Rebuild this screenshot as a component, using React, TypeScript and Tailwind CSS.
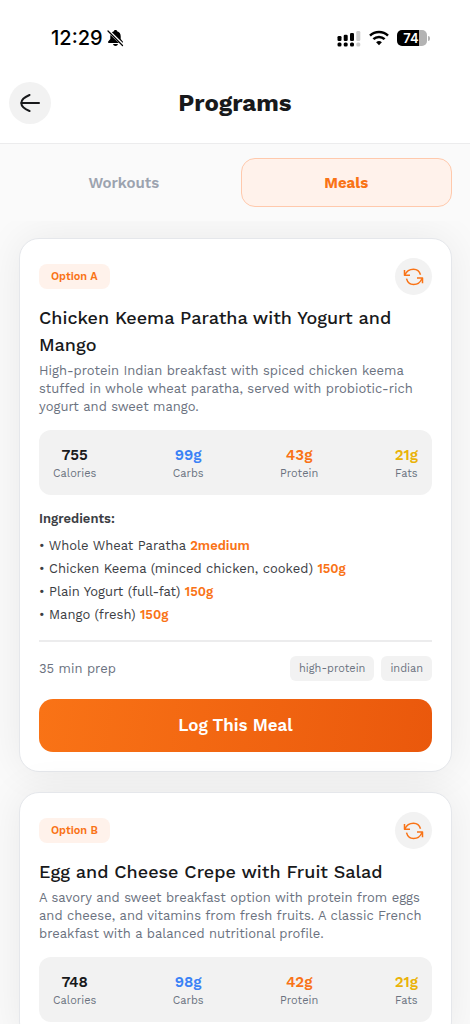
interface Meal {
  option: string;
  title: string;
  desc: string;
  macros: [string, string, string, string];
  ingredients?: { name: string; amount: string }[];
  prep?: string;
  tags?: string[];
}

const MEALS: Meal[] = [
  {
    option: "Option A",
    title: "Chicken Keema Paratha with Yogurt and Mango",
    desc: "High-protein Indian breakfast with spiced chicken keema stuffed in whole wheat paratha, served with probiotic-rich yogurt and sweet mango.",
    macros: ["755", "99g", "43g", "21g"],
    ingredients: [
      { name: "Whole Wheat Paratha", amount: "2medium" },
      { name: "Chicken Keema (minced chicken, cooked)", amount: "150g" },
      { name: "Plain Yogurt (full-fat)", amount: "150g" },
      { name: "Mango (fresh)", amount: "150g" },
    ],
    prep: "35 min prep",
    tags: ["high-protein", "indian"],
  },
  {
    option: "Option B",
    title: "Egg and Cheese Crepe with Fruit Salad",
    desc: "A savory and sweet breakfast option with protein from eggs and cheese, and vitamins from fresh fruits. A classic French breakfast with a balanced nutritional profile.",
    macros: ["748", "98g", "42g", "21g"],
  },
];

const MACROS = [
  { label: "Calories", color: "text-[#18191b]" },
  { label: "Carbs", color: "text-[#3b82f6]" },
  { label: "Protein", color: "text-[#f97316]" },
  { label: "Fats", color: "text-[#eab308]" },
];

function StatusBar() {
  return (
    <div className="flex h-[76px] items-center justify-between pr-10 pl-[51px] font-[Inter,sans-serif]">
      <div className="flex items-center gap-1">
        <span className="text-xl leading-6 font-medium text-black">12:29</span>
        <svg width="17" height="18" viewBox="0 0 17 18">
          <path
            d="M8.500 1C7.600 1 7 1.500 6.900 2.300 4.600 3 3.300 4.900 3.300 7.300v2.700L1.200 12.600c-.4.600-.1 1.400.6 1.400h13.400c.7 0 1-.8.6-1.400L13.700 10V7.300c0-2.400-1.300-4.300-3.600-5C10 1.500 9.400 1 8.500 1z"
            fill="#000"
          />
          <path d="M6 15h5c-.3 1.300-1.300 2-2.500 2S6.300 16.300 6 15z" fill="#000" />
          <path d="M1.500 2l14.500 14" stroke="#fff" strokeWidth="3" />
          <path d="M1 2l14.500 14.500" stroke="#000" strokeWidth="1.300" strokeLinecap="round" />
        </svg>
      </div>
      <div className="flex items-center gap-2">
        <svg width="24" height="17" viewBox="0 0 24 17">
          <g fill="#000">
            <rect x="0.500" y="6" width="4" height="5" rx="1.300" />
            <rect x="6.700" y="4.800" width="4" height="6.200" rx="1.300" />
            <rect x="13" y="3" width="4" height="8" rx="1.300" />
            <rect x="0.500" y="12.500" width="4" height="4" rx="1.500" />
            <rect x="6.700" y="12.500" width="4" height="4" rx="1.500" />
            <rect x="13" y="12.500" width="4" height="4" rx="1.500" />
          </g>
          <g fill="#ccc">
            <rect x="19.300" y="1" width="4" height="10" rx="1.300" />
            <rect x="19.300" y="12.500" width="4" height="4" rx="1.500" />
          </g>
        </svg>
        <svg width="20" height="16" viewBox="0 0 20 16" fill="none" stroke="#000" strokeWidth="2.500">
          <path d="M1 5.700a13 13 0 0 1 18 0" />
          <path d="M4.400 9.200a8 8 0 0 1 11.200 0" />
          <path d="M10 15.300l-2.900-3a4.200 4.200 0 0 1 5.800 0z" fill="#000" stroke="none" />
        </svg>
        <div className="flex items-center gap-px">
          <div className="flex h-4 w-[30px] items-center justify-center rounded-[5px] bg-linear-to-r from-black from-74% to-[#b3b3b3] to-74% pr-0.5 text-[13px] leading-4 font-semibold text-white">
            74
          </div>
          <div className="h-[5px] w-0.5 rounded-r-full bg-[#b3b3b3]" />
        </div>
      </div>
    </div>
  );
}

function SwapIcon() {
  return (
    <svg
      width="21"
      height="18"
      viewBox="0 0 21 18"
      fill="none"
      stroke="#f97316"
      strokeWidth="1.500"
      strokeLinejoin="round"
    >
      <path d="M1.500 2v5.200H7" />
      <path d="M1.800 7C3.400 3.400 6.600 1.200 10.500 1.200c3.300 0 6 2 7 5.600" />
      <path d="M14 10h5.500v5.200" />
      <path d="M3.500 10.600c1 3.700 3.700 5.900 7 5.900 3.900 0 7.100-2.400 8.700-6.300" />
    </svg>
  );
}

function MealCard({ meal }: { meal: Meal }) {
  return (
    <article className="rounded-[20px] border border-gray-200 bg-white p-[19px] shadow-[0_0_40px_rgba(0,0,0,0.07)]">
      <div className="flex items-center justify-between">
        <span className="rounded-lg bg-[#fff2eb] px-3 text-[11px] leading-[25px] font-semibold text-[#f97316]">
          {meal.option}
        </span>
        <button
          aria-label="Swap meal"
          className="flex size-[37px] items-center justify-center rounded-full bg-[#f2f2f2]"
        >
          <SwapIcon />
        </button>
      </div>

      <h2 className="mt-[9px] text-lg leading-[27px] font-medium text-[#18191b]">{meal.title}</h2>
      <p className="mt-1 text-[13px] leading-[18px] text-[#6b7280]">{meal.desc}</p>

      <div className="mt-3.5 flex h-[65px] items-center justify-between rounded-xl bg-[#f2f2f2] px-3.5 pt-0.5">
        {MACROS.map((m, i) => (
          <div key={m.label} className="text-center">
            <div className={`text-[15px] leading-5 font-semibold ${m.color}`}>{meal.macros[i]}</div>
            <div className="text-[11px] leading-[18px] text-[#6b7280]">{m.label}</div>
          </div>
        ))}
      </div>

      {meal.ingredients && (
        <>
          <h3 className="mt-3.5 text-[13px] leading-5 font-semibold text-[#3c3e44]">
            Ingredients:
          </h3>
          <ul className="mt-[5px] text-[13px] leading-[23px] text-[#3c3e44]">
            {meal.ingredients.map((ing) => (
              <li key={ing.name}>
                • {ing.name} <span className="font-semibold text-[#f97316]">{ing.amount}</span>
              </li>
            ))}
          </ul>
        </>
      )}

      {meal.tags && (
        <>
          <div className="mt-3.5 flex items-center justify-between border-t-2 border-[#ececed] pt-3.5">
            <span className="text-[13px] leading-[18px] text-[#6b7280]">{meal.prep}</span>
            <div className="flex gap-[7px]">
              {meal.tags.map((tag) => (
                <span
                  key={tag}
                  className="rounded-md bg-[#f2f2f2] px-[9px] text-[11px] leading-[25px] text-[#6b7280]"
                >
                  {tag}
                </span>
              ))}
            </div>
          </div>
          <button className="mt-[18px] h-[53px] w-full rounded-[14px] bg-linear-98 from-[#f97316] to-[#ea580c] text-[17px] font-semibold text-white">
            Log This Meal
          </button>
        </>
      )}
    </article>
  );
}

export default function App() {
  return (
    <div className="flex h-screen flex-col overflow-hidden bg-[#fafafa] font-['Work_Sans',Inter,sans-serif]">
      <header className="border-b border-[#ececed] bg-white">
        <StatusBar />
        <div className="grid h-[67px] grid-cols-[42px_1fr_42px] items-start px-[9px] pt-1.5">
          <button
            aria-label="Back"
            className="flex size-[42px] items-center justify-center rounded-full bg-[#f2f2f2]"
          >
            <svg
              width="20"
              height="18"
              viewBox="0 0 20 18"
              fill="none"
              stroke="#18191b"
              strokeWidth="2"
              strokeLinecap="round"
              strokeLinejoin="round"
            >
              <path d="M1.500 9H19" />
              <path d="M9.500 1C4 3.300 1.300 5.500 1.300 9S4 14.700 9.500 17" />
            </svg>
          </button>
          <h1 className="text-center text-2xl leading-[42px] font-bold text-[#18191b]">
            Programs
          </h1>
        </div>
      </header>

      <nav className="flex gap-3 py-3.5 pr-[18px] pl-[19px]">
        <button className="h-[49px] flex-1 rounded-[14px] pt-0.5 text-[15px] font-semibold text-[#9ca3af]">
          Workouts
        </button>
        <button className="h-[49px] flex-1 rounded-[14px] border border-[#ffc9ac] bg-[#fff2eb] pt-0.5 text-[15px] font-bold text-[#f97316]">
          Meals
        </button>
      </nav>

      <main className="flex min-h-0 flex-1 flex-col gap-5 overflow-y-auto pt-[17px] pr-[18px] pb-5 pl-[19px] [scrollbar-width:none]">
        {MEALS.map((meal) => (
          <MealCard key={meal.option} meal={meal} />
        ))}
      </main>
    </div>
  );
}
